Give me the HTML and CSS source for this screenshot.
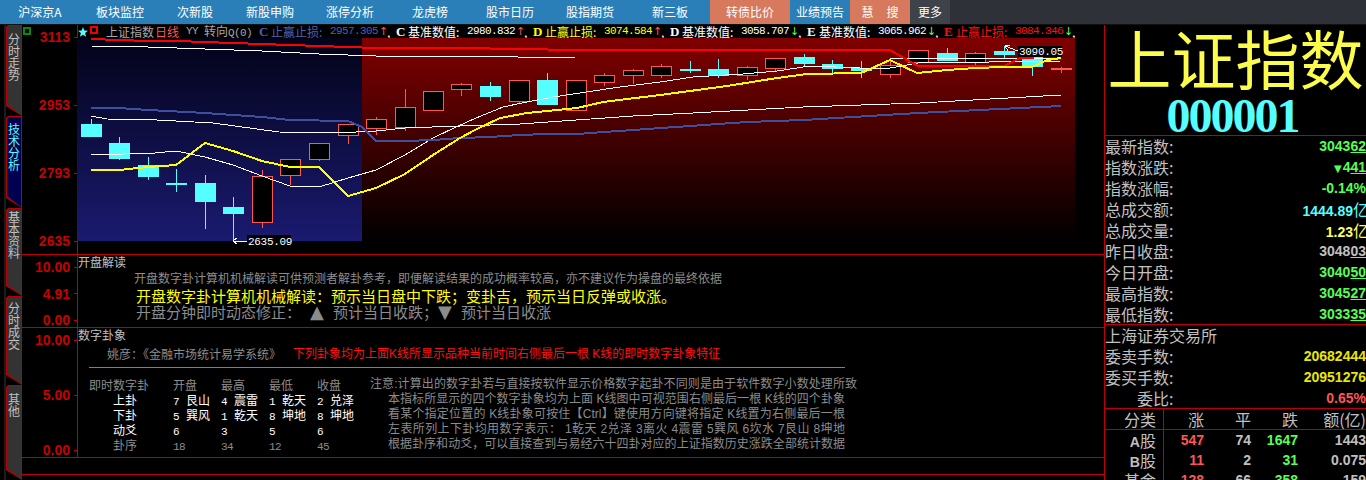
FILE: index.html
```html
<!DOCTYPE html>
<html lang="zh-CN">
<head>
    <meta charset="UTF-8">
    <title>上证指数 日线</title>
    <link rel="stylesheet" href="styles.css">
</head>
<body>
<div class="page">
    <nav class="nav">
        <a class="nav-item w80">沪深京A</a>
        <a class="nav-item w80">板块监控</a>
        <a class="nav-item w70">次新股</a>
        <a class="nav-item w80">新股申购</a>
        <a class="nav-item w80">涨停分析</a>
        <a class="nav-item w80">龙虎榜</a>
        <a class="nav-item w80">股市日历</a>
        <a class="nav-item w80">股指期货</a>
        <a class="nav-item w80">新三板</a>
        <a class="nav-item w80 hot">转债比价</a>
        <a class="nav-item w60">业绩预告</a>
        <a class="nav-item w60 hot search"><span>慧</span><span>搜</span></a>
        <a class="nav-item w40 more">更多</a>
    </nav>

    <div class="work">
        <!-- vertical tabs -->
        <div class="tabs">
            <div class="tab t1"><span>分时走势</span></div>
            <div class="tab t2 active"><span>技术分析</span></div>
            <div class="tab t3"><span>基本资料</span></div>
            <div class="tab t4"><span>分时成交</span></div>
            <div class="tab t5"><span>其他</span></div>
        </div>

        <div class="center">
            <!-- K line pane -->
            <section class="pane pane-k">
                <div class="axis axis-k">
                    <i class="green-box"></i>
                    <span class="tick">3113</span>
                    <span class="tick">2953</span>
                    <span class="tick">2793</span>
                    <span class="tick">2635</span>
                </div>
                <div class="k-body">
                    <div class="k-head">
                        <svg class="hd-star" width="10" height="10" viewBox="0 0 10 10"><path d="M5 0 6.3 3.5 10 3.7 7.1 6 8.1 9.8 5 7.7 1.9 9.8 2.9 6 0 3.7 3.7 3.5z"/></svg>
                        <i class="hd-mark"></i>
                        <span class="hd-name">上证指数</span>
                        <span class="hd-period">日线</span>
                        <span class="hd-yy">YY</span>
                        <span class="hd-turn">转向<em>Q(0)</em></span>
                        <div class="grp blue"><b>C</b><span class="lbl">止赢止损:</span><span class="num">2957.305</span><span class="arr up">↑</span><span class="cm">,</span></div>
                        <div class="grp white"><b>C</b><span class="lbl">基准数值:</span><span class="num">2980.832</span><span class="arr up">↑</span><span class="cm">,</span></div>
                        <div class="grp yellow"><b>D</b><span class="lbl">止赢止损:</span><span class="num">3074.584</span><span class="arr up">↑</span><span class="cm">,</span></div>
                        <div class="grp white"><b>D</b><span class="lbl">基准数值:</span><span class="num">3058.707</span><span class="arr down">↓</span><span class="cm">,</span></div>
                        <div class="grp white"><b>E</b><span class="lbl">基准数值:</span><span class="num">3065.962</span><span class="arr down">↓</span><span class="cm">,</span></div>
                        <div class="grp red"><b>E</b><span class="lbl">止赢止损:</span><span class="num">3084.346</span><span class="arr down">↓</span><span class="cm">,</span></div>
                    </div>
                    <svg class="k-chart" width="1027" height="216" viewBox="77 38 1027 216">
                        <defs>
                            <linearGradient id="bgBlue" x1="0" y1="0" x2="0" y2="1">
                                <stop offset="0" stop-color="#03031a"/>
                                <stop offset="1" stop-color="#1a1a70"/>
                            </linearGradient>
                            <linearGradient id="bgRed" x1="0" y1="0" x2="0" y2="1">
                                <stop offset="0" stop-color="#800000"/>
                                <stop offset="1" stop-color="#000000"/>
                            </linearGradient>
                        </defs>
                        <rect x="77" y="38" width="285" height="203" fill="url(#bgBlue)"/>
                        <rect x="362" y="38" width="713" height="203" fill="url(#bgRed)"/>

                        <path class="wick-dn" d="M91.5 119V124M119.5 137V160M148.5 157V180M176.5 169V192M205.5 175V229M233.5 197V241M490.5 82V101M547.5 73V80M690.5 61V73M718.5 59V78M804.5 54V67M832.5 60V73M861.5 61V78M947.5 48V61M1004.5 46V58M1032.5 57V76"/>
                        <path class="wick-up" d="M262.5 170V228M290.5 159V185M319.5 159V161M348.5 136V144M376.5 117V135M405.5 89V131M461.5 83V96M519.5 101V104M604.5 73V86M633.5 69V84M661.5 64V78M747.5 66V80M775.5 68V71M890.5 60V78M975.5 52V65M1061.5 67V73"/>

                        <g class="body-dn">
                            <rect x="81" y="124" width="21" height="13"/>
                            <rect x="109" y="143" width="21" height="16"/>
                            <rect x="138" y="165" width="21" height="12"/>
                            <rect x="166" y="183" width="21" height="2"/>
                            <rect x="195" y="183" width="21" height="19"/>
                            <rect x="223" y="207" width="21" height="7"/>
                            <rect x="480" y="86" width="21" height="11"/>
                            <rect x="537" y="80" width="21" height="25"/>
                            <rect x="680" y="69" width="21" height="2"/>
                            <rect x="708" y="69" width="21" height="7"/>
                            <rect x="794" y="57" width="21" height="7"/>
                            <rect x="822" y="64" width="21" height="5"/>
                            <rect x="851" y="68" width="21" height="3"/>
                            <rect x="937" y="53" width="21" height="8"/>
                            <rect x="994" y="51" width="21" height="4"/>
                            <rect x="1022" y="57" width="21" height="10"/>
                        </g>
                        <g class="body-up">
                            <rect x="252.5" y="176.5" width="20" height="46"/>
                            <rect x="280.5" y="159.5" width="20" height="16"/>
                            <rect x="309.5" y="143.5" width="20" height="16"/>
                            <rect x="338.5" y="124.5" width="20" height="11"/>
                            <rect x="366.5" y="119.5" width="20" height="9"/>
                            <rect x="395.5" y="107.5" width="20" height="20"/>
                            <rect x="423.5" y="91.5" width="20" height="19"/>
                            <rect x="451.5" y="84.5" width="20" height="5"/>
                            <rect x="509.5" y="80.5" width="20" height="21"/>
                            <rect x="566.5" y="80.5" width="20" height="30"/>
                            <rect x="594.5" y="75.5" width="20" height="7"/>
                            <rect x="623.5" y="70.5" width="20" height="5"/>
                            <rect x="651.5" y="66.5" width="20" height="9"/>
                            <rect x="737.5" y="67.5" width="20" height="8"/>
                            <rect x="765.5" y="58.5" width="20" height="10"/>
                            <rect x="880.5" y="65.5" width="20" height="9"/>
                            <rect x="908.5" y="50.5" width="20" height="12"/>
                            <rect x="965.5" y="53.5" width="20" height="9"/>
                        </g>
                        <rect class="flat-up" x="1051" y="68" width="21" height="2"/>

                        <polyline class="ln-white" points="91,46 148,47 205,49 262,51 319,54 376,56 460,56 575,58 890,58 1061,59"/>
                        <polyline class="ln-white" points="91,116 107,119 157,120 213,123 279,132 337,133 376,131 405,128 460,126 520,124 633,116 693,113 803,107 920,103 1061,95"/>
                        <polyline class="ln-white" points="91,155 155,153 176,151 205,157 233,165 262,176 290,186 319,187 348,178 376,170 405,155 433,138 456,127 476,118 503,107 527,102 553,97 593,91 620,87 660,82 693,77 743,74 777,71 810,66 860,68 890,68 918,63 1061,61"/>
                        <polyline class="ln-red" points="91,39 119,40 148,41 176,41 205,42 233,43 262,44 290,45 319,46 348,47 376,48 460,48 577,50 890,50 918,66 1004,66 1020,58 1034,58"/>
                        <polyline class="ln-blue" points="91,108 119,108 148,110 205,113 262,117 290,120 348,121 362,127 376,141 405,141 433,140 460,138 490,137 519,135 547,134 577,134 604,132 633,130 661,128 690,126 718,124 747,122 775,121 804,120 918,113 1061,106"/>
                        <polyline class="ln-yellow" points="91,170 119,170 148,167 176,165 205,143 233,151 262,161 290,167 319,167 348,196 376,188 405,174 433,155 460,138 477,129 500,118 527,113 577,108 603,102 660,95 727,86 777,78 807,74 861,73 890,60 917,73 947,70 975,68 1004,67 1032,67 1047,60 1061,58"/>

                        <path class="note-arrow" d="M247 241H233M233 241 237 238M233 241 237 244"/>
                        <rect x="247" y="235" width="44" height="13" fill="#000"/>
                        <text class="note-text" x="248" y="245">2635.09</text>
                        <path class="note-arrow" d="M1018 51 1005 46M1005 46 1008 51M1005 46 1010 45"/>
                        <rect x="1018" y="46" width="44" height="11" fill="#000"/>
                        <text class="note-text" x="1019" y="55">3090.05</text>
                    </svg>
                </div>
            </section>

            <!-- opening reading -->
            <section class="pane pane-open">
                <div class="axis axis-low">
                    <span class="tick">10.00</span>
                    <span class="tick">4.91</span>
                    <span class="tick">0.00</span>
                </div>
                <div class="txt-body">
                    <div class="pane-title">开盘解读</div>
                    <p class="open-note">开盘数字卦计算机机械解读可供预测者解卦参考&#xFF0C;即便解读结果的成功概率较高&#xFF0C;亦不建议作为操盘的最终依据</p>
                    <p class="open-main">开盘数字卦计算机机械解读&#xFF1A;预示当日盘中下跌&#xFF1B;变卦吉&#xFF0C;预示当日反弹或收涨。</p>
                    <p class="open-fix">开盘分钟即时动态修正&#xFF1A;<span class="tri tri-a">▲</span>预计当日收跌&#xFF1B;<span class="tri tri-b">▼</span>预计当日收涨</p>
                </div>
            </section>

            <!-- hexagram -->
            <section class="pane pane-hex">
                <div class="axis axis-low">
                    <span class="tick">10.00</span>
                    <span class="tick">5.00</span>
                    <span class="tick">0.00</span>
                </div>
                <div class="txt-body">
                    <div class="pane-title">数字卦象</div>
                    <p class="hex-intro"><span class="hex-author">姚彦&#xFF1A;《金融市场统计易学系统》</span><span class="hex-red">下列卦象均为上面K线所显示品种当前时间右侧最后一根 K线的即时数字卦象特征</span></p>
                    <div class="hex-rule"></div>
                    <div class="hex-row">
                        <div class="hex-table">
                            <span class="h0 dim">即时数字卦</span><span class="dim">开盘</span><span class="dim">最高</span><span class="dim">最低</span><span class="dim">收盘</span>
                            <span class="h1">上卦</span><span><i>7</i>艮山</span><span><i>4</i>震雷</span><span><i>1</i>乾天</span><span><i>2</i>兑泽</span>
                            <span class="h1">下卦</span><span><i>5</i>巽风</span><span><i>1</i>乾天</span><span><i>8</i>坤地</span><span><i>8</i>坤地</span>
                            <span class="h1">动爻</span><span><i>6</i></span><span><i>3</i></span><span><i>5</i></span><span><i>6</i></span>
                            <span class="h1 dim">卦序</span><span class="dim"><i>18</i></span><span class="dim"><i>34</i></span><span class="dim"><i>12</i></span><span class="dim"><i>45</i></span>
                        </div>
                        <div class="hex-notes">
                            <p class="first">注意:计算出的数字卦若与直接按软件显示价格数字起卦不同则是由于软件数字小数处理所致</p>
                            <p>本指标所显示的四个数字卦象均为上面 K线图中可视范围右侧最后一根 K线的四个卦象</p>
                            <p>看某个指定位置的 K线卦象可按住【Ctrl】键使用方向键将指定 K线置为右侧最后一根</p>
                            <p>左表所列上下卦均用数字表示&#xFF1A; 1乾天 2兑泽 3离火 4震雷 5巽风 6坎水 7艮山 8坤地</p>
                            <p>根据卦序和动爻&#xFF0C;可以直接查到与易经六十四卦对应的上证指数历史涨跌全部统计数据</p>
                        </div>
                    </div>
                </div>
            </section>

            <section class="pane pane-empty"></section>
        </div>

        <!-- quote side -->
        <aside class="side">
            <div class="side-title">
                <div class="stock-name">上证指数</div>
                <div class="stock-code">000001</div>
            </div>
            <div class="quote">
                <div class="row"><span>最新指数:</span><span class="v green">3043<u>62</u></span></div>
                <div class="row"><span>指数涨跌:</span><span class="v green"><small>▼</small>4<u>41</u></span></div>
                <div class="row"><span>指数涨幅:</span><span class="v green">-0.14%</span></div>
                <div class="row"><span>总成交额:</span><span class="v cyan">1444.89<em>亿</em></span></div>
                <div class="row"><span>总成交量:</span><span class="v yellow">1.23<em>亿</em></span></div>
                <div class="row"><span>昨日收盘:</span><span class="v grey">3048<u>03</u></span></div>
                <div class="row"><span>今日开盘:</span><span class="v green">3040<u>50</u></span></div>
                <div class="row"><span>最高指数:</span><span class="v green">3045<u>27</u></span></div>
                <div class="row"><span>最低指数:</span><span class="v green">3033<u>35</u></span></div>
            </div>
            <div class="order">
                <div class="row"><span>上海证券交易所</span></div>
                <div class="row"><span>委卖手数:</span><span class="v gold">20682444</span></div>
                <div class="row"><span>委买手数:</span><span class="v gold">20951276</span></div>
                <div class="row"><span class="indent">委比:</span><span class="v coral">0.65%</span></div>
            </div>
            <div class="mkt">
                <span class="c0 hd">分类</span><span class="hd">涨</span><span class="hd">平</span><span class="hd">跌</span><span class="hd">额(亿)</span>
                <span class="c0"><b>A</b>股</span><span class="n coral">547</span><span class="n grey">74</span><span class="n green">1647</span><span class="n grey">1443</span>
                <span class="c0"><b>B</b>股</span><span class="n coral">11</span><span class="n grey">2</span><span class="n green">31</span><span class="n grey">0.075</span>
                <span class="c0">基金</span><span class="n coral">128</span><span class="n grey">66</span><span class="n green">358</span><span class="n grey">159</span>
            </div>
        </aside>
    </div>
</div>
</body>
</html>
```

FILE: styles.css
```css
* {
    box-sizing: border-box;
}
html, body {
    margin: 0;
    background: #000;
}
body {
    font-family: "Noto Sans CJK SC", sans-serif;
    font-size: 12px;
    color: #8c8c8c;
}
p {
    margin: 0;
}
.page {
    width: 1366px;
    height: 480px;
    overflow: hidden;
    display: flex;
    flex-direction: column;
}

/* top nav */
.nav {
    height: 25px;
    flex: none;
    display: flex;
    background: #2e3238;
    border-bottom: 1px solid #111;
}
.nav-item {
    height: 24px;
    background: #2b7fb8;
    color: #fff;
    line-height: 24px;
    text-align: center;
}
.w80 { width: 80px; }
.w70 { width: 70px; }
.w60 { width: 60px; }
.w40 { width: 40px; }
.nav-item.hot { background: #d6795c; }
.nav-item.more { background: #3e434a; }
.search {
    display: flex;
    justify-content: center;
    gap: 13px;
}

/* work area */
.work {
    flex: 1;
    display: flex;
    min-height: 0;
}
.tabs {
    width: 22px;
    flex: none;
    padding-left: 6px;
    background: linear-gradient(90deg, #000 4px, #1c1c1c 4px, #1c1c1c 6px, #000 6px);
    display: flex;
    flex-direction: column;
}
.tab {
    position: relative;
    flex: none;
    width: 16px;
    background: #b80000;
    clip-path: polygon(2px 0, 100% 0, 100% 100%, 100% 100%, 0 calc(100% - 10px), 0 2px);
    color: #c0c0c0;
    line-height: 12px;
    text-align: center;
}
.tab::before {
    content: "";
    position: absolute;
    inset: 1px 1px 1px 1px;
    background: #333;
    clip-path: polygon(2px 0, 100% 0, 100% 100%, 100% 100%, 0 calc(100% - 11px), 0 2px);
}
.tab span {
    position: relative;
    display: block;
    width: 12px;
    margin-left: 2px;
}
.t1 { height: 91px; }
.t1 span { padding-top: 8px; }
.t2 { height: 92px; }
.t2 span { padding-top: 7px; }
.t3 { height: 88px; }
.t3 span { padding-top: 3px; }
.t4 { height: 89px; }
.t4 span { padding-top: 6px; }
.t5 { height: 95px; }
.t5 span { padding-top: 8px; }
.tab.active { color: #55ffff; }
.tab.active::before { background: #000050; }

.center {
    width: 1082px;
    flex: none;
    display: flex;
    flex-direction: column;
}
.pane {
    display: flex;
    flex: none;
    border-bottom: 1px solid #c00000;
}
.pane-k { height: 230px; }
.pane-open { height: 73px; }
.pane-hex { height: 130px; }
.pane-empty { height: 17px; }

/* axis */
.axis {
    position: relative;
    width: 55px;
    flex: none;
    display: flex;
    flex-direction: column;
    justify-content: space-between;
    align-items: flex-end;
    color: #c80000;
    font-family: "Liberation Sans", sans-serif;
    font-weight: bold;
    font-size: 14px;
    line-height: 14px;
}
.axis-k { padding: 5px 0 6px; }
.axis-low { padding: 5px 0 0; }
.tick {
    display: flex;
    align-items: center;
    gap: 4px;
}
.tick::after {
    content: "";
    width: 3px;
    height: 1px;
    background: #c80000;
}
.green-box {
    position: absolute;
    left: 1px;
    top: 2px;
    width: 8px;
    height: 8px;
    border: 2px solid #0a8a0a;
}

/* K line pane */
.k-body {
    width: 1027px;
    flex: none;
    border-left: 1px solid #c00000;
    display: flex;
    flex-direction: column;
}
.k-chart {
    display: block;
    margin-left: -1px;
    shape-rendering: crispEdges;
}
.k-head {
    height: 13px;
    flex: none;
    display: flex;
    align-items: center;
    line-height: 13px;
    white-space: nowrap;
    color: #a8a8a8;
}
.hd-star { fill: #55ffff; margin-right: 2px; }
.hd-mark {
    width: 8px;
    height: 8px;
    margin: -4px 0 0 0;
    border: 2px solid #f00000;
}
.hd-name { margin-left: 8px; }
.hd-period { margin-left: 1px; color: #ff5555; }
.hd-yy {
    width: 12px;
    margin-left: 7px;
    font-family: "Liberation Mono", monospace;
    font-size: 11px;
    letter-spacing: -0.6px;
}
.hd-turn { margin-left: 6px; width: 55px; }
.hd-turn em {
    font-style: normal;
    font-family: "Liberation Mono", monospace;
    font-size: 11px;
    letter-spacing: -0.6px;
}
.grp {
    width: 137px;
    flex: none;
    display: flex;
}
.grp b {
    width: 12px;
    font-family: "Liberation Serif", serif;
    font-size: 13px;
}
.lbl { width: 59px; }
.num {
    width: 49px;
    font-family: "Liberation Mono", monospace;
    font-size: 11px;
    letter-spacing: -0.6px;
}
.arr {
    width: 8px;
    font-family: "DejaVu Sans", sans-serif;
    font-size: 11px;
    text-align: center;
}
.arr.up { color: #ff5555; }
.arr.down { color: #55ff55; }
.cm { color: #fff; }
.blue { color: #4f5fb4; }
.white { color: #fff; }
.yellow { color: #ffff00; }
.red { color: #ff1010; }

.wick-dn { stroke: #55ffff; fill: none; }
.wick-up { stroke: #ff5555; fill: none; }
.body-dn { fill: #55ffff; }
.body-up { fill: #000; stroke: #ff5555; }
.flat-up { fill: #ff5555; }
.k-chart polyline { fill: none; }
.ln-white { stroke: #fff; stroke-width: 1; }
.ln-red { stroke: #ff0000; stroke-width: 2; }
.ln-blue { stroke: #404f9c; stroke-width: 2; }
.ln-yellow { stroke: #ffff00; stroke-width: 2; }
.note-arrow { stroke: #fff; fill: none; }
.note-text {
    fill: #fff;
    font-family: "Liberation Mono", monospace;
    font-size: 11px;
    letter-spacing: -0.3px;
}

/* text panes */
.txt-body {
    flex: 1;
    border-left: 1px solid #c00000;
    min-width: 0;
    white-space: nowrap;
}
.pane-title {
    height: 13px;
    color: #c0c0c0;
    line-height: 13px;
}
.open-note {
    margin: 3px 0 0 56px;
    line-height: 14px;
}
.open-main {
    margin: 3px 0 0 58px;
    font-size: 15px;
    line-height: 16px;
    color: #ffff00;
}
.open-fix {
    margin-left: 58px;
    font-size: 15px;
    line-height: 16px;
}
.tri {
    display: inline-block;
    width: 14px;
    font-family: "DejaVu Sans", sans-serif;
    font-size: 18px;
    line-height: 14px;
    text-align: center;
}
.tri-a { margin: 0 9px; }
.tri-b { margin-right: 9px; }

.hex-intro {
    margin: 6px 0 0 29px;
    height: 14px;
    line-height: 14px;
    display: flex;
}
.hex-author { width: 186px; }
.hex-red { color: #ff1010; font-family: "Liberation Sans", "Noto Sans CJK SC", sans-serif; }
.hex-rule {
    margin: 6px 0 0 11px;
    width: 756px;
    height: 1px;
    background: #808080;
}
.hex-row {
    margin-top: 9px;
    display: flex;
    line-height: 15px;
}
.hex-table {
    margin-left: 11px;
    width: 281px;
    flex: none;
    display: grid;
    grid-template-columns: 84px 48px 48px 48px 53px;
    grid-auto-rows: 15px;
    color: #fff;
}
.hex-table i {
    display: inline-block;
    min-width: 13px;
    font-style: normal;
    font-family: "Liberation Mono", monospace;
    font-size: 11px;
    letter-spacing: -0.6px;
}
.h1 { padding-left: 24px; }
.dim { color: #8c8c8c; }
.hex-notes {
    font-family: "Liberation Sans", "Noto Sans CJK SC", sans-serif;
}
.hex-notes p {
    margin-left: 18px;
    width: 457px;
    text-align-last: justify;
}
.hex-notes p.first {
    margin-left: 0;
    width: 487px;
}

/* right side */
.side {
    flex: 1;
    min-width: 0;
    border-left: 1px solid #c00000;
    overflow: hidden;
    color: #c0c0c0;
    font-size: 16px;
}
.side-title {
    height: 111px;
    border-bottom: 1px solid #c00000;
    text-align: center;
    overflow: hidden;
}
.stock-name {
    height: 71px;
    font-size: 64px;
    font-weight: 400;
    line-height: 62px;
    color: #fcfc4c;
    white-space: nowrap;
}
.stock-code {
    margin-left: -6px;
    font-family: "Liberation Serif", serif;
    font-size: 48px;
    font-weight: bold;
    letter-spacing: -2px;
    line-height: 40px;
    color: #55ffff;
}
.quote {
    height: 189px;
    border-bottom: 1px solid #c00000;
}
.order {
    height: 84px;
    border-bottom: 1px solid #c00000;
}
.row {
    height: 21px;
    display: flex;
    justify-content: space-between;
    line-height: 21px;
    white-space: nowrap;
}
.quote .row:last-child { height: 20px; }
.indent { padding-left: 32px; }
.v {
    font-family: "Liberation Sans", sans-serif;
    font-size: 14px;
    font-weight: bold;
}
.v em {
    font-family: "Noto Sans CJK SC", sans-serif;
    font-size: 16px;
    font-weight: normal;
    font-style: normal;
    margin-right: -3px;
}
.v small {
    font-family: "DejaVu Sans", sans-serif;
    font-size: 10px;
    margin-right: 1px;
}
.green { color: #55ff55; }
.cyan { color: #55ffff; }
.yellow.v { color: #ffff55; }
.grey { color: #c0c0c0; }
.gold { color: #e8e800; }
.coral { color: #ff5555; }

.mkt {
    display: grid;
    grid-template-columns: 59px 40px 47px 47px 68px;
    grid-template-rows: 21px 20px 20px 20px;
    line-height: 20px;
    text-align: right;
    white-space: nowrap;
}
.mkt .c0 {
    padding-right: 7px;
    border-right: 1px solid #c00000;
}
.mkt b {
    font-family: "Liberation Sans", sans-serif;
    font-size: 14px;
}
.mkt .hd { border-bottom: 1px solid #c00000; }
.mkt .n {
    font-family: "Liberation Sans", sans-serif;
    font-size: 14px;
    font-weight: bold;
}
```
